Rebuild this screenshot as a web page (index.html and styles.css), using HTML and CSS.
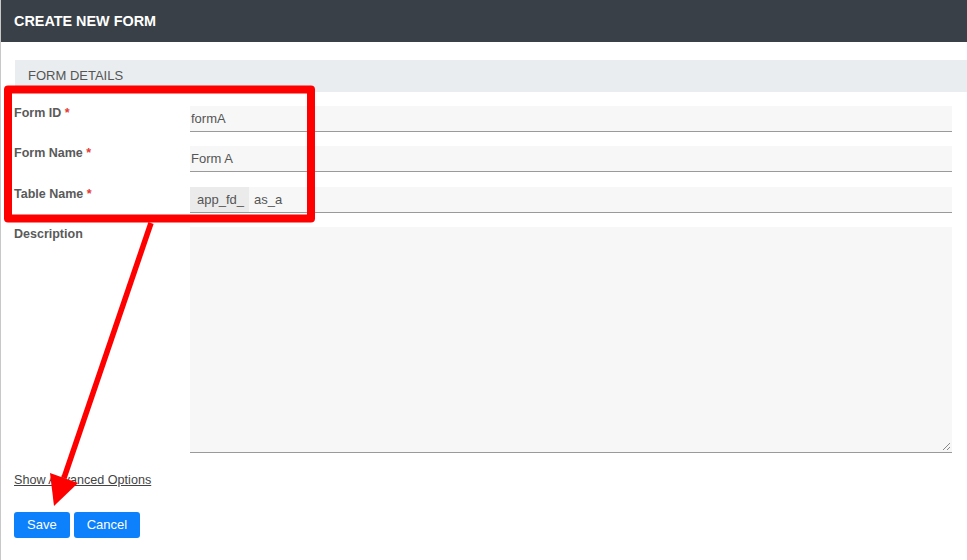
FILE: index.html
```html
<!DOCTYPE html>
<html>
<head>
<meta charset="utf-8">
<link rel="stylesheet" href="styles.css">
</head>
<body>
<div class="page">
  <header class="header">CREATE NEW FORM</header>
  <div class="content">
    <div class="section">FORM DETAILS</div>
    <div class="form">
      <div class="row">
        <label class="label">Form ID <span class="req">*</span></label>
        <div class="input">formA</div>
      </div>
      <div class="row">
        <label class="label">Form Name <span class="req">*</span></label>
        <div class="input">Form A</div>
      </div>
      <div class="row">
        <label class="label">Table Name <span class="req">*</span></label>
        <div class="input group"><span class="prefix">app_fd_</span><span class="val">as_a</span></div>
      </div>
      <div class="row">
        <label class="label">Description</label>
        <div class="textarea"><svg class="grip" width="10" height="10" viewBox="0 0 10 10"><path d="M9 2 L2 9 M9 6 L6 9" stroke="#888" stroke-width="1"/></svg></div>
      </div>
    </div>
    <a class="advanced">Show Advanced Options</a>
    <div class="buttons">
      <button class="btn">Save</button>
      <button class="btn">Cancel</button>
    </div>
  </div>
  <svg class="annot" width="967" height="560" viewBox="0 0 967 560">
    <rect x="7" y="89.5" width="303" height="129" fill="none" stroke="#ff0000" stroke-width="8" stroke-linejoin="round"/>
    <line x1="150" y1="223" x2="63" y2="478" stroke="#ff0000" stroke-width="5.5"/>
    <polygon points="53,506 49,473 77,483" fill="#ff0000"/>
  </svg>
</div>
</body>
</html>
```

FILE: styles.css
```css
html, body {
  margin: 0;
  padding: 0;
  background: #fff;
}
.page {
  position: relative;
  width: 967px;
  height: 560px;
  overflow: hidden;
  font-family: "Liberation Sans", Arial, sans-serif;
  border-left: 1px solid #c8c8c8;
  box-sizing: border-box;
}
.header {
  height: 42px;
  background: #3a4047;
  color: #fff;
  font-weight: bold;
  font-size: 14.4px;
  line-height: 42px;
  padding-left: 13px;
}
.content {
  padding: 18px 15px 0 13px;
}
.section {
  margin-left: 1px;
  margin-right: -15px;
  height: 32px;
  line-height: 32px;
  background: #e9edef;
  color: #555;
  font-size: 13px;
  padding-left: 13px;
}
.form {
  display: flex;
  flex-direction: column;
  gap: 14.33px;
  margin-top: 14px;
}
.row {
  display: grid;
  grid-template-columns: 176px 1fr;
}
.label {
  font-size: 12.5px;
  font-weight: bold;
  color: #5a5a5a;
  padding-top: 0;
}
.req {
  color: #e53935;
}
.input {
  height: 26px;
  box-sizing: border-box;
  background: #f7f7f7;
  border-bottom: 1px solid #9a9a9a;
  font-size: 13px;
  color: #555;
  line-height: 25px;
  padding-left: 1px;
}
.input.group {
  display: flex;
  padding-left: 0;
}
.prefix {
  background: #ebebeb;
  padding: 0 5px 0 7px;
}
.val {
  padding-left: 5px;
}
.textarea {
  position: relative;
  height: 226px;
  box-sizing: border-box;
  background: #f7f7f7;
  border-bottom: 1px solid #9a9a9a;
}
.grip {
  position: absolute;
  right: 1px;
  bottom: 1px;
}
.advanced {
  display: inline-block;
  margin-top: 20px;
  font-size: 12.6px;
  color: #444;
  text-decoration: underline;
}
.buttons {
  display: flex;
  gap: 4px;
  margin-top: 24px;
}
.btn {
  font-family: "Liberation Sans", Arial, sans-serif;
  font-size: 13px;
  color: #fff;
  background: #0d80fb;
  border: none;
  border-radius: 3px;
  height: 26px;
  padding: 0 13px;
}
.annot {
  position: absolute;
  left: 0;
  top: 0;
  pointer-events: none;
}
```
